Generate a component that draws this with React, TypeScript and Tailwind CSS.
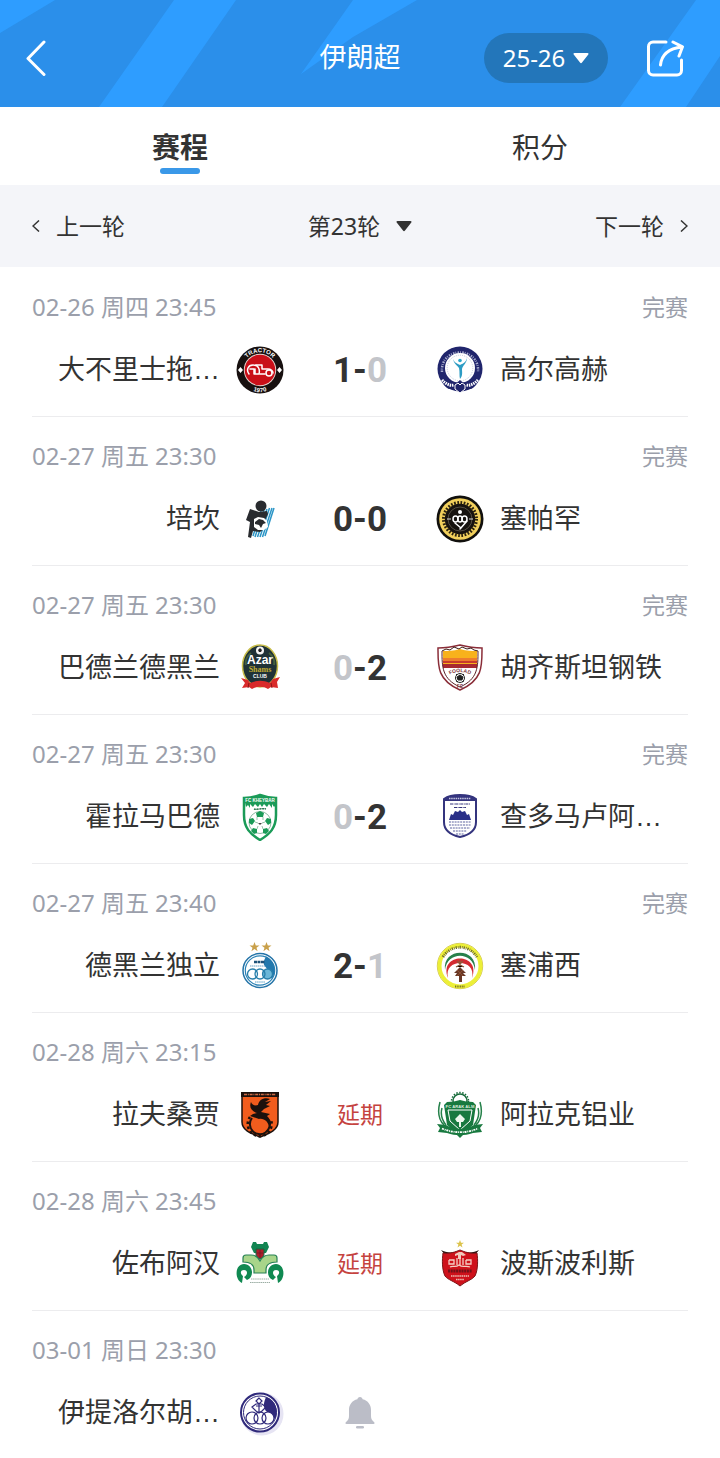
import { useState, type ReactNode } from "react";

type CrestId =
  | "tractor"
  | "golgohar"
  | "paykan"
  | "sepahan"
  | "azar"
  | "foolad"
  | "kheybar"
  | "chadormalu"
  | "esteghlal"
  | "sepidrood"
  | "mes"
  | "aluminium"
  | "zobahan"
  | "persepolis"
  | "khuzestan";

interface Team {
  name: string;
  crest: CrestId;
}

interface Match {
  date: string;
  status?: string;
  home: Team;
  away?: Team;
  score?: [number, number];
  postponed?: boolean;
}

const MATCHES: Match[] = [
  {
    date: "02-26 周四 23:45",
    status: "完赛",
    home: { name: "大不里士拖…", crest: "tractor" },
    away: { name: "高尔高赫", crest: "golgohar" },
    score: [1, 0],
  },
  {
    date: "02-27 周五 23:30",
    status: "完赛",
    home: { name: "培坎", crest: "paykan" },
    away: { name: "塞帕罕", crest: "sepahan" },
    score: [0, 0],
  },
  {
    date: "02-27 周五 23:30",
    status: "完赛",
    home: { name: "巴德兰德黑兰", crest: "azar" },
    away: { name: "胡齐斯坦钢铁", crest: "foolad" },
    score: [0, 2],
  },
  {
    date: "02-27 周五 23:30",
    status: "完赛",
    home: { name: "霍拉马巴德", crest: "kheybar" },
    away: { name: "查多马卢阿…", crest: "chadormalu" },
    score: [0, 2],
  },
  {
    date: "02-27 周五 23:40",
    status: "完赛",
    home: { name: "德黑兰独立", crest: "esteghlal" },
    away: { name: "塞浦西", crest: "sepidrood" },
    score: [2, 1],
  },
  {
    date: "02-28 周六 23:15",
    home: { name: "拉夫桑贾", crest: "mes" },
    away: { name: "阿拉克铝业", crest: "aluminium" },
    postponed: true,
  },
  {
    date: "02-28 周六 23:45",
    home: { name: "佐布阿汉", crest: "zobahan" },
    away: { name: "波斯波利斯", crest: "persepolis" },
    postponed: true,
  },
  {
    date: "03-01 周日 23:30",
    home: { name: "伊提洛尔胡…", crest: "khuzestan" },
  },
];

const STAR = "M0-5 1.3-1.6 5-1.5 2 .7 3.1 4.3 0 2.1-3.1 4.3-2 .7-5-1.5-1.3-1.6Z";

// Crests share a 48x48 box.
const CRESTS: Record<CrestId, ReactNode> = {
  tractor: (
    <>
      <circle cx="24" cy="24" r="23.5" fill="#17100f" />
      <circle cx="24" cy="24" r="16.2" fill="#e8d8d2" />
      <circle cx="24" cy="24" r="15.3" fill="#c90f18" />
      <path id="tractor-arc" d="M6.3 24a17.700 17.700 0 0 1 35.400 0" fill="none" />
      <text fontSize="6" fontWeight="700" fill="#fff" textAnchor="middle">
        <textPath href="#tractor-arc" startOffset="50%">TRACTOR</textPath>
      </text>
      <path id="tractor-year" d="M8.400 39.600a22 22 0 0 0 31.200 0" fill="none" />
      <text fontSize="6" fontWeight="700" fill="#fff" textAnchor="middle">
        <textPath href="#tractor-year" startOffset="50%">1970</textPath>
      </text>
      <path d="m4.500 21 2.500 3-2.500 3L2 24ZM43.500 21l2.500 3-2.500 3-2.500-3Z" fill="#fff" />
      <g fill="none" stroke="#fff" strokeWidth="1.500" strokeLinecap="round" strokeLinejoin="round">
        <path d="M13 28c-3-4-1-9 4-9 6 0 7 5 6 9h-4v-5M14 23h4v5" />
        <path d="M20 19h6v4h6c3 0 5 2 5 4M24 28h5" />
        <circle cx="33" cy="27" r="3" />
      </g>
    </>
  ),
  golgohar: (
    <>
      <circle cx="24" cy="23" r="22.500" fill="#20256c" />
      <path d="M6 26C4 0 44 0 42 26" fill="none" stroke="#a9adce" strokeWidth="2.500" strokeDasharray="1.500 1 .8 1.300" />
      <circle cx="24" cy="22" r="15" fill="#fff" />
      <circle cx="24" cy="22" r="12.800" fill="none" stroke="#c5c9dd" strokeWidth="1" strokeDasharray="1 1" />
      <circle cx="24" cy="14.500" r="1.800" fill="#2aa7cb" />
      <path d="M17 13c1 5 4 6 6 9 1 4 0 8 1 11 3-3 2-7 2-10 1-4 5-6 5-11-1 4-3 5-7 7-4-2-6-3-7-6Z" fill="#2c9cc4" />
      <path d="M5 31c8 8 14 8 19 3 5 5 11 5 19-3-1 6-4 10-8 12H13C9 41 6 37 5 31Z" fill="#20256c" />
      <path d="M6 34c4 4 8 6 12 5M42 34c-4 4-8 6-12 5" fill="none" stroke="#fff" strokeWidth="3" strokeDasharray="1.500 .8" />
      <path d="M19 43v-4l3-2 2 2 2-2 3 2v4l-5 4Z" fill="#20256c" stroke="#fff" strokeWidth="1" />
    </>
  ),
  paykan: (
    <>
      <g stroke="#2b95c6" strokeWidth="1.500">
        <path d="M25 16 17 41M28 15 19 42M31 14 21.500 42M33.500 13 24 42M36 13 26.500 42M38 13 29 41" />
      </g>
      <circle cx="25" cy="11" r="5.500" fill="#292b2f" />
      <path d="m14 14 9 3 8-1 1 3-3 6v8l-5 4-7-1-2 7-3-1 2-15-4-2Z" fill="#292b2f" />
      <path d="m18 24 4-2 6 1 3 3 1 6-4 3h-6l-4-3Z" fill="#fff" />
      <path d="m19 27 4-3 4 1 3 3-3 1-2 4-2-3-4-1Z" fill="#292b2f" />
    </>
  ),
  sepahan: (
    <>
      <circle cx="24" cy="24" r="23.500" fill="#11100d" />
      <circle cx="24" cy="24" r="20.800" fill="#f2d05c" />
      <circle cx="24" cy="24" r="16.500" fill="none" stroke="#2a210e" strokeWidth="3" strokeDasharray="1.700 1.540" />
      <circle cx="24" cy="24" r="15.200" fill="#17130f" />
      <circle cx="24" cy="24" r="12" fill="none" stroke="#6e6759" strokeWidth=".7" />
      <path d="M11 24h4M33 24h4" stroke="#ddd" />
      <circle cx="24" cy="17" r="2" fill="#fff" />
      <g fill="none" stroke="#fff" strokeWidth="1.500" strokeLinecap="round">
        <ellipse cx="19.500" cy="24" rx="2.500" ry="3" />
        <ellipse cx="24" cy="24" rx="2.200" ry="3" />
        <ellipse cx="28.500" cy="24" rx="2.500" ry="3" />
        <path d="m19 28 6 5M31 26l-7 8" />
      </g>
    </>
  ),
  azar: (
    <>
      <ellipse cx="24" cy="22" rx="17.500" ry="21" fill="#203237" stroke="#c8bd4a" strokeWidth="1.500" />
      <path d="M15 9c-4 3-6 8-5 12M33 9c4 3 6 8 5 12" fill="none" stroke="#445f3d" strokeWidth="2" />
      <circle cx="24" cy="6.500" r="4" fill="#f4f4f4" />
      <path d="m24 4 2 2-1 2h-2l-1-2Z" fill="#222" />
      <text x="24" y="20" fontSize="12" fontWeight="700" fill="#fff" textAnchor="middle">Azar</text>
      <text x="24" y="28" fontSize="8" fontWeight="700" fill="#c0ab32" textAnchor="middle" className="font-['Liberation_Serif',serif]">Shams</text>
      <text x="24" y="34" fontSize="5" fontWeight="700" fill="#fff" textAnchor="middle">CLUB</text>
      <path d="m5 34 7 2 2 3c7-3 13-3 20 0l3-4 7-2-3 5 1 6-7-1-3 2c-5-3-11-3-16 0l-3-2-7 1 3-5Z" fill="#d92b2b" />
      <path d="m13 39-1 5M35 39l1 5" stroke="#8e1717" />
    </>
  ),
  foolad: (
    <>
      <path d="M2 4c8 0 14-1 22-3 8 2 14 3 22 3 0 18 1 32-22 42C1 36 2 22 2 4Z" fill="#fff" stroke="#8a2d38" strokeWidth="1.500" />
      <path d="M7 7c5 0 10 0 17-2 7 2 12 2 17 2v13H7Z" fill="#f8b21c" />
      <path d="M6 7 10 5l4 1 4-3 5 2 3-2 5 2 4-1 3 2 4 1" fill="none" stroke="#3b1b14" strokeWidth="1" />
      <path d="M7 14h34v3H7z" fill="#ee7d2d" />
      <path d="M7 17h34v2H7z" fill="#c83b2d" />
      <path d="M7 20h34v4H7z" fill="#a72931" />
      <path d="M6 7c0 16 0 28 18 36C42 35 42 23 42 7" fill="none" stroke="#5b2228" strokeWidth="1" />
      <path id="foolad-arc" d="M9 34c8-8 22-8 30 0" fill="none" />
      <text fontSize="5" fontWeight="700" fill="#7c3037" textAnchor="middle">
        <textPath href="#foolad-arc" startOffset="50%">FOOLAD</textPath>
      </text>
      <circle cx="24" cy="34" r="4.500" fill="#fff" stroke="#222" />
      <path d="m24 31 3 2-1 3h-4l-1-3ZM20 31l1-1M28 31l-1-1M20 37l2 1M28 37l-2 1" fill="#222" stroke="#222" />
      <text x="24" y="43.500" fontSize="4.500" fontWeight="700" fill="#7c3037" textAnchor="middle">FC</text>
    </>
  ),
  kheybar: (
    <>
      <path d="M8 5c6 0 11-1 16-3 5 2 10 3 16 3v17c0 13-6 19-16 25C14 41 8 35 8 22Z" fill="#fff" stroke="#1b9b58" strokeWidth="2.500" />
      <path d="M8 5c6 0 11-1 16-3 5 2 10 3 16 3v7l-2 2-2-3v4l-3-4-2 3-3-3-2 3-2-3-2 3-3-3-2 3-3-3v4l-2-3-2 2Z" fill="#1b9b58" />
      <text x="24" y="8.500" fontSize="4.500" fontWeight="700" fill="#fff" textAnchor="middle">FC KHEYBAR</text>
      <path d="M18 16c3 1 8-1 12 0" stroke="#287b50" strokeWidth="1.500" strokeDasharray="2 .7" />
      <circle cx="24" cy="29.500" r="11" fill="#fff" stroke="#71a98b" strokeWidth=".8" />
      <g fill="#1b9b58">
        <path d="m24 18 4 2-1 4h-6l-1-4ZM13 26l4-1 2 3-3 4-3-2ZM35 26l-4-1-2 3 3 4 3-2ZM17 35l4 1v4l-3 1-3-3ZM31 35l-4 1v4l3 1 3-3Z" />
      </g>
      <path d="M21 24v3M27 24v3M19 29l3 1M29 29l-3 1M21 36l1-3M27 36l-1-3" stroke="#9cc5ae" />
      <path d="m24 32-2-2h4Z" fill="#444" />
    </>
  ),
  chadormalu: (
    <>
      <path d="M8 6c4-3 11-4 16-4s12 1 16 4v23c0 9-7 13-16 15C15 42 8 38 8 29Z" fill="#fff" stroke="#34347e" strokeWidth="2" />
      <path d="M8 6c4-3 11-4 16-4s12 1 16 4v2H8Z" fill="#34347e" />
      <path d="M13 5.500h22" stroke="#c5c6e1" strokeWidth="1.600" strokeDasharray="1.500 .7" />
      <path d="M14 11h20M18 14.500h12" stroke="#34347e" strokeWidth="1" strokeDasharray="3 .6 1 .5" />
      <path d="m13 27 2-6 2 1 2-4 3 1 2-2 2 2 3-1 2 4 2-1 2 6Z" fill="#292f88" />
      <path d="M13 29h22M13 32h22M14 35h20M17 38h14M20 41h8" stroke="#5c629f" strokeWidth="1" strokeDasharray="2 .8" />
    </>
  ),
  esteghlal: (
    <>
      <path d={STAR} fill="#c9a04a" transform="translate(18.500 5)" />
      <path d={STAR} fill="#c9a04a" transform="translate(30.500 5)" />
      <circle cx="24" cy="28.500" r="17" fill="#fff" stroke="#2474a8" strokeWidth="1.500" />
      <circle cx="24" cy="28.500" r="14.700" fill="#fff" stroke="#2b83b6" strokeWidth="1.200" />
      <path d="M30 14.500c9 4 11 15 6 22-3-1-3-7-6-11-4-4-2-7 0-11Z" fill="#2178ad" />
      <path d="M18 20h11" stroke="#1d5279" strokeWidth="2.500" strokeDasharray="3 .5" />
      <path d="M14 24h15" stroke="#6da5c6" strokeDasharray="1.500 .5" />
      <g fill="none" stroke="#287fab" strokeWidth="1.300">
        <circle cx="16.500" cy="32" r="5" />
        <circle cx="31.500" cy="32" r="5" fill="#6cb7d8" />
        <circle cx="24" cy="32" r="5" />
      </g>
      <path d="M19 40h10" stroke="#5aa1c7" strokeDasharray="1.500 .6" />
    </>
  ),
  sepidrood: (
    <>
      <circle cx="24" cy="24" r="22.700" fill="#fff" stroke="#c8b82f" strokeWidth=".8" />
      <circle cx="24" cy="24" r="20.500" fill="none" stroke="#ecef37" strokeWidth="4" />
      <path d="M7 15C15 2 33 2 41 15" fill="none" stroke="#6e6a2b" strokeWidth="2.800" strokeDasharray="1.300 1 .7 1" />
      <path d="M9 28C6 5 42 5 39 28 37 9 11 9 9 28Z" fill="#27804b" />
      <path d="M12 36C2 10 46 10 36 36 41 16 7 16 12 36Z" fill="#d42a31" />
      <path d="m24 22-3-3M24 22v-5M24 22l3-3M20 25l4-2 4 2" stroke="#8d5a3a" strokeWidth="1.200" />
      <path d="m24 25-6 6h3l-2 3h4v6h3v-6h4l-3-3h3Z" fill="#693826" />
      <path d="m21 28 6 6M27 28l-6 6" stroke="#a45c38" strokeWidth=".6" />
      <path d="M19 44.500h10" stroke="#767323" strokeWidth="2" strokeDasharray="1 .7" />
    </>
  ),
  mes: (
    <>
      <path d="M6 2h36v29c0 8-8 11-18 15C14 42 6 39 6 31Z" fill="#f15c1d" stroke="#1c110d" strokeWidth="1.500" />
      <path d="M5 1h38v5H5z" fill="#1c110d" />
      <path d="M8 3.500h32" stroke="#cb6a43" strokeWidth="1.500" strokeDasharray="3 .8 1 .8" />
      <path d="M21 22c-6-2-8-6-6-11 1 3 4 4 7 3 1-5 6-8 12-6l-5 3 6-1-5 4 4 1-6 3-3 3 9 2-3 2c4 4 5 8 2 12 0-6-5-10-10-9l-9-3 3-2Z" fill="#1c110d" />
      <path d="M16 27a10 10 0 1 0 17 2" fill="none" stroke="#1c110d" strokeWidth="2" />
      <path d="M14 26a12 12 0 1 0 21 3" fill="none" stroke="#1c110d" strokeWidth="2.500" strokeDasharray="2.500 2.500" />
    </>
  ),
  aluminium: (
    <>
      <circle cx="24" cy="10" r="7" fill="#fff" stroke="#176b3a" strokeWidth="1.500" />
      <circle cx="24" cy="10" r="8.500" fill="none" stroke="#176b3a" strokeWidth="1.500" strokeDasharray="1.500 1.500" />
      <path d="M11 11c5 0 9-1 13-2 4 1 8 2 13 2l3 3-3 20-13 11-13-11L8 14Z" fill="#18793f" />
      <path d="M12 19h24l-2 11-10 9-10-9Z" fill="none" stroke="#fff" />
      <text x="24" y="16.500" fontSize="4.200" fontWeight="700" fill="#dcebdc" textAnchor="middle">FC ARAK ALM</text>
      <path d="m24 23 5 5-2 3h-2v5h-2v-5h-2l-2-3Z" fill="#edf7ed" />
      <g fill="none" stroke="#25814a" strokeWidth="1.500">
        <path d="M8 34C3 29 1 22 4 11M10 34C6 29 4 24 6 17M40 34c5-5 7-12 4-23M38 34c4-5 6-10 4-17" />
      </g>
      <path d="m1 33 9 1c9 5 19 5 28 0l9-1-3 4 2 4-9 1c-9 3-17 3-26 0l-9-1 2-4Z" fill="#18793f" />
      <path d="M6 37.500c12 5 24 5 36 0" fill="none" stroke="#fff" strokeWidth="1.800" strokeDasharray="2 .8 1 .8" />
      <path d="m19 42 5 5 5-5Z" fill="#18793f" />
    </>
  ),
  zobahan: (
    <>
      <path d="M17 2h3l1 2h6l1-2h3l2 5-3 6H18l-3-6Z" fill="#128552" />
      <path d="M20 9h8v5c0 3-2 4-4 5-2-1-4-2-4-5Z" fill="#ae1e2b" stroke="#17623f" />
      <path d="M21 13h6M24 10v8" stroke="#641e22" strokeWidth=".7" />
      <path d="M7 18c0-2 1-3 3-3h5c4 0 7 2 9 6 2-4 5-6 9-6h5c2 0 3 1 3 3v4c-7 0-11 2-11 8v3H18v-3c0-6-4-8-11-8Z" fill="#a8d58a" stroke="#278155" strokeWidth="1.200" />
      <path d="M6 43C-2 39-1 24 8 24c9 0 11 13 3 16l-3-3c4-2 4-7 0-7-4 0-4 4-1 6ZM42 43c8-4 7-19-2-19-9 0-11 13-3 16l3-3c-4-2-4-7 0-7 4 0 4 4 1 6Z" fill="#108951" />
      <path d="M15 39h18M14 42.500h20" stroke="#9baea4" strokeWidth="1" strokeDasharray="1.500 .6" />
    </>
  ),
  persepolis: (
    <>
      <path d={STAR} fill="#dcc34c" transform="translate(24 4) scale(.8)" />
      <path d="M5 10c5 3 12 3 19 1 7 2 14 2 19-1l-4 5H9Z" fill="#241411" />
      <path d="M7 13c7 1 12-1 17-3 5 2 10 4 17 3 1 7 1 17-2 23-3 4-9 5-15 10-6-5-12-6-15-10-3-6-3-16-2-23Z" fill="#ce111b" stroke="#7b1618" />
      <path d="m19 14 4-2h3l4 3-3 1-2-1v4h-3v-4l-3 1Z" fill="#f1c9bc" />
      <g stroke="#f5cfc6" strokeWidth="1.300" fill="none">
        <path d="M13 20h5v4h-5v-4M21 18v7M24 17v8M27 18v7M30 20h5v4h-5v-4M14 27c3-2 5 1 9-2 4 3 7 0 11 2" />
      </g>
      <path d="M12 31h24" stroke="#70131a" strokeWidth="3" strokeDasharray="2 .7" />
      <path d="M15 36h18M20 39.500h8" stroke="#ecc0b6" strokeWidth="1.300" strokeDasharray="1.500 .6" />
    </>
  ),
  khuzestan: (
    <>
      <circle cx="26" cy="25" r="21.500" fill="#e6e4f3" />
      <circle cx="24" cy="23.500" r="19" fill="#fff" stroke="#302a7b" strokeWidth="2" />
      <circle cx="24" cy="23.500" r="16.500" fill="#fff" stroke="#302a7b" strokeWidth="1" />
      <path d="M30 8c10 3 13 14 9 22-3-2-5-4-8-7-5-5-3-10-1-15Z" fill="#302a7b" />
      <path d="m23 9-3 3 3 3 3-3ZM16 18l4-3h6l4 3-4 4-3 2-3-2ZM20 17h6M23 15v9" fill="none" stroke="#302a7b" strokeWidth="1.200" />
      <g fill="none" stroke="#302a7b" strokeWidth="1.200">
        <circle cx="16" cy="29" r="6" />
        <circle cx="32" cy="29" r="6" fill="#fff" />
        <circle cx="24" cy="29" r="6" />
      </g>
    </>
  ),
};

function Crest({ id }: { id: CrestId }) {
  return (
    <svg viewBox="0 0 48 48" className="size-12 shrink-0 font-['Liberation_Sans',sans-serif]" aria-hidden="true">
      {CRESTS[id]}
    </svg>
  );
}

function Caret() {
  return (
    <svg viewBox="0 0 16 12" className="h-3 w-4" fill="currentColor" aria-hidden="true">
      <path d="M1.500 1h13c1 0 1.300 1 .8 1.600l-6.300 8c-.6.700-1.400.700-2 0l-6.300-8C.200 2 .500 1 1.500 1Z" />
    </svg>
  );
}

function Chevron({ next = false }: { next?: boolean }) {
  return (
    <svg viewBox="0 0 8 12" className="h-3 w-2" fill="none" stroke="currentColor" strokeWidth="1.500" aria-hidden="true">
      <path d={next ? "M1 .5 7 6l-6 5.500" : "M7 .5 1 6l6 5.500"} />
    </svg>
  );
}

function Header() {
  return (
    <header className="relative grid h-[107px] grid-cols-[1fr_auto_1fr] items-center overflow-hidden bg-[#2b8fea] px-6 pt-2 text-white">
      <svg viewBox="0 0 720 107" preserveAspectRatio="none" className="absolute inset-0 size-full" fill="#2e9dff" aria-hidden="true">
        <path d="M0 0h55L0 33ZM174 0h62l-74 107H99ZM353 0h64l-64 37-52 37ZM696 0h24v56l-34 51h-66Z" />
      </svg>
      <button type="button" aria-label="返回" className="relative justify-self-start">
        <svg viewBox="0 0 24 36" className="h-9 w-6" fill="none" stroke="currentColor" strokeWidth="3" strokeLinecap="round" strokeLinejoin="round">
          <path d="M20 2 4 18.500l16 16" />
        </svg>
      </button>
      <h1 className="relative text-[27px]">伊朗超</h1>
      <div className="relative flex items-center gap-[38px] justify-self-end pr-3">
        <button type="button" className="flex h-[50px] w-[124px] items-center justify-center gap-2 rounded-full bg-[#2376ba] text-2xl">
          25-26
          <Caret />
        </button>
        <button type="button" aria-label="分享">
          <svg viewBox="0 0 38 38" className="size-[38px]" fill="none" stroke="currentColor" strokeWidth="3" strokeLinecap="round" strokeLinejoin="round">
            <path d="M20 3H7a4.500 4.500 0 0 0-4.500 4.500v24A4.500 4.500 0 0 0 7 36h24a4.500 4.500 0 0 0 4.500-4.500V21" />
            <path d="M14.500 26C15.500 16 23 9.500 36 8M27 3l9.500 4.800L33 17" />
          </svg>
        </button>
      </div>
    </header>
  );
}

function Score({ score: [home, away] }: { score: [number, number] }) {
  return (
    <p className="grid grid-cols-[1fr_auto_1fr] items-center font-[Roboto,sans-serif] text-[35px] leading-none font-bold text-[#333]">
      <span className={home < away ? "text-right text-[#c3c5ca]" : "text-right"}>{home}</span>
      <span>-</span>
      <span className={away < home ? "text-[#c3c5ca]" : ""}>{away}</span>
    </p>
  );
}

function MatchRow({ match }: { match: Match }) {
  const { date, status, home, away, score, postponed } = match;

  return (
    <li className="border-b border-[#ececee] pt-[25px] pb-[22px] last:border-0 last:pb-5">
      <div className="flex h-7 items-center justify-between text-[#9b9fab]">
        <time className="text-2xl">{date}</time>
        {status && <span className="text-[23px]">{status}</span>}
      </div>
      <div className="mt-[25px] grid h-12 grid-cols-[1fr_152px_1fr] items-center font-['Liberation_Sans','Noto_Sans_CJK_SC',sans-serif] text-[27px] text-[#333]">
        <div className="flex items-center justify-end gap-4">
          <span className="whitespace-nowrap">{home.name}</span>
          <Crest id={home.crest} />
        </div>
        {score && <Score score={score} />}
        {postponed && <p className="text-center text-[23px] text-[#c5433f]">延期</p>}
        {!score && !postponed && (
          <button type="button" aria-label="提醒" className="justify-self-center text-[#bbbdc7]">
            <svg viewBox="0 0 30 34" className="h-[34px] w-[30px]" fill="currentColor">
              <path d="M15 1c1.500 0 2.500 1 2.600 2.300C23 4.500 26 9 26 14v6c0 3 1 4.500 3 6 1 1 .6 2-.5 2h-27C.4 28 0 27 1 26c2-1.500 3-3 3-6v-6c0-5 3-9.500 8.400-10.700C12.500 2 13.500 1 15 1Z" />
              <rect x="11" y="30" width="8" height="2.500" rx="1.200" />
            </svg>
          </button>
        )}
        {away && (
          <div className="flex items-center gap-4">
            <Crest id={away.crest} />
            <span className="whitespace-nowrap">{away.name}</span>
          </div>
        )}
      </div>
    </li>
  );
}

const TABS = ["赛程", "积分"];

export default function App() {
  const [tab, setTab] = useState("赛程");

  return (
    <div className="bg-white font-['Noto_Sans','Noto_Sans_CJK_SC',sans-serif] text-[#333]">
      <Header />

      <nav className="grid h-[78px] grid-cols-2">
        {TABS.map((name) => (
          <button
            key={name}
            type="button"
            onClick={() => setTab(name)}
            className={`flex flex-col items-center pt-5 text-[28px] leading-10 ${tab === name ? "font-bold" : ""}`}
          >
            {name}
            {tab === name && <span className="mt-px h-1.5 w-10 rounded-full bg-[#3a98e8]" />}
          </button>
        ))}
      </nav>

      <div className="grid h-[82px] grid-cols-3 items-center bg-[#f4f5f9] px-8 text-[23px]">
        <button type="button" className="flex items-center gap-4 justify-self-start">
          <Chevron />
          上一轮
        </button>
        <button type="button" className="flex items-center gap-4 justify-self-center">
          第23轮
          <Caret />
        </button>
        <button type="button" className="flex items-center gap-4 justify-self-end">
          下一轮
          <Chevron next />
        </button>
      </div>

      <ul className="px-8 pt-px">
        {MATCHES.map((match) => (
          <MatchRow key={match.date + match.home.name} match={match} />
        ))}
      </ul>
    </div>
  );
}
